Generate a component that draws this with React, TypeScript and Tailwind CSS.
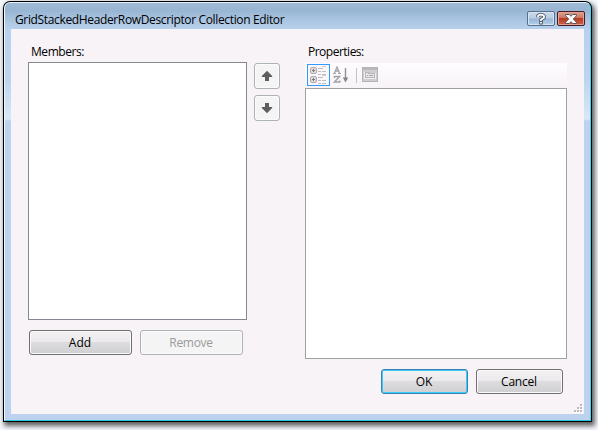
import React from "react";

type ButtonProps = {
  label: string;
  size: string;
  variant?: "normal" | "default" | "disabled";
  tracking?: string;
};

const looks = {
  normal:
    "border-[#707070] bg-[linear-gradient(#f4f1f3_0%,#ebe9eb_46%,#dddcde_50%,#cfced0_100%)] text-black shadow-[inset_0_0_0_1px_#fbfafb]",
  default:
    "border-[#3c7fb1] bg-[linear-gradient(#f4f1f3_0%,#ebe9eb_46%,#dddcde_50%,#cfced0_100%)] text-black shadow-[inset_0_0_0_1px_#36cdf8]",
  disabled:
    "border-[#adb2b5] bg-[#f5f4f5] text-[#9a9a9c] shadow-[inset_0_0_0_1px_#fbfbfb]",
};

function DialogButton({ label, size, variant = "normal", tracking = "" }: ButtonProps) {
  return (
    <button
      className={`flex h-[25px] items-center justify-center rounded-[3px] border pt-px pr-px text-[12px] leading-none ${size} ${looks[variant]}`}
    >
      <span className={tracking}>{label}</span>
    </button>
  );
}

function ArrowButton({ down = false }: { down?: boolean }) {
  return (
    <button className="flex h-[26px] w-[26px] items-center justify-center rounded-[3px] border border-[#adb2b5] bg-[#f5f4f5] shadow-[inset_0_0_0_1px_#fcfcfc]">
      <svg width="12" height="12" viewBox="0 0 12 12" className={down ? "rotate-180" : ""}>
        <path d="M6 .7 11.2 6v1H8v4H4V7H.8V6z" fill="#5e5e5e" />
      </svg>
    </button>
  );
}

function CategoryIcon() {
  return (
    <svg width="21" height="20" viewBox="0 0 21 20" fill="none" shapeRendering="crispEdges">
      {[2, 11].map((y) => (
        <g key={y} transform={`translate(0 ${y})`}>
          <rect x="2.5" y=".5" width="6" height="6" rx="1.5" fill="#dedcde" stroke="#aeacae" shapeRendering="auto" />
          <path d="M4 3.5h3M5.5 2v3" stroke="#7d7b7d" />
          <path d="M10 1.5h5M10 4.5h3M14 4.5h4M10 7.5h3M14 7.5h4" stroke="#bebcbe" />
        </g>
      ))}
      <path d="M14 1.5h4M14 10.5h4" stroke="#cfcdcf" />
    </svg>
  );
}

function SortIcon() {
  return (
    <svg width="17" height="18" viewBox="0 0 17 18" fill="none" stroke="#a5a3a5">
      <path d="M1.5 7 4 1 6.5 7M2.2 5h3.6" strokeWidth="1.3" />
      <path d="M0 7.5h2.8M5 7.5h3" strokeWidth="1" />
      <path d="M1.5 12v-1.5h5L1.5 16h5.3v-1.5" strokeWidth="1.5" />
      <path d="M12.5 2v12" stroke="#949294" strokeWidth="1.4" />
      <path d="M9.8 11.5h5.4L12.5 16.4z" fill="#858385" stroke="none" />
    </svg>
  );
}

function PagesIcon() {
  return (
    <svg width="16" height="15" viewBox="0 0 16 15" fill="none" shapeRendering="crispEdges">
      <rect x=".5" y=".5" width="15" height="14" fill="#d0ced0" stroke="#b5b3b5" />
      <path d="M1 1.5h14M1 2.5h14" stroke="#bab8ba" />
      <path d="M2.5 5.5h4v1h7v5h-11z" fill="#f0eef0" stroke="#f0eef0" />
      <path d="M3.5 5.5h3v1h6v4h-9z" fill="#e9e7e9" stroke="#b7b5b7" />
      <path d="M5 8.5h1M7 8.5h4" stroke="#a5a3a5" />
    </svg>
  );
}

function TitleBar() {
  return (
    <header className="flex h-[26px] items-start bg-[linear-gradient(#9fb9d5_0%,#98b5d3_30%,#a7c3df_60%,#b8d1ed_100%)] pr-[5px] pl-[10px]">
      <h1 className="mt-[8px] text-[12px] leading-[18px] font-normal whitespace-nowrap">
        <span className="tracking-[-0.355px]">GridStackedHeaderRowDescriptor Collection Editor</span>
      </h1>
      <div className="mt-[8px] ml-auto flex gap-[2px]">
        <button className="flex h-[15px] w-[28px] items-center justify-center rounded-[2px] border border-[#586f8b] bg-[linear-gradient(#c7d9ec_0%,#b9cee5_48%,#99b5d5_52%,#b2d0ec_100%)] shadow-[inset_0_0_0_1px_#d6e4f2]">
          <svg width="10" height="12" viewBox="0 0 10 12" fill="none">
            <path d="M2 4.2V2.8L3.2 1.9h3.4L8 3v1.8L5 6.7V8" stroke="#4b5562" strokeWidth="3.4" />
            <path d="M3.2 8h3.6v3.6H3.2z" fill="#4b5562" />
            <path d="M2 4.2V2.8L3.2 1.9h3.4L8 3v1.8L5 6.7V8" stroke="#fff" strokeWidth="1.7" />
            <path d="M4.1 9h1.8v1.6H4.1z" fill="#fff" />
          </svg>
        </button>
        <button className="flex h-[15px] w-[28px] items-center justify-center rounded-[2px] border border-[#471b25] bg-[linear-gradient(#dc9e91_0%,#cd7762_46%,#b63c21_50%,#ce6246_100%)] shadow-[inset_0_0_0_1px_#e2a294]">
          <svg width="12" height="10" viewBox="0 0 12 10">
            <path
              d="M.6.5h3.7L6 2.3 7.7.5h3.7v1.3L8.3 5l3.1 3.2v1.3H7.7L6 7.7 4.3 9.5H.6V8.2L3.7 5 .6 1.8z"
              fill="#fff"
              stroke="#59545b"
            />
          </svg>
        </button>
      </div>
    </header>
  );
}

function ResizeGrip() {
  const dots = [[6, 0], [3, 3], [6, 3], [0, 6], [3, 6], [6, 6]];
  return (
    <svg width="9" height="9" viewBox="0 0 9 9" className="mt-[10px] mr-[1px] ml-auto block" shapeRendering="crispEdges">
      {dots.map(([x, y]) => (
        <g key={`${x}-${y}`}>
          <rect x={x + 1} y={y + 1} width="2" height="2" fill="#fff" />
          <rect x={x} y={y} width="2" height="2" fill="#bdbabf" />
        </g>
      ))}
    </svg>
  );
}

export default function App() {
  return (
    <div className="h-[430px] w-[598px] overflow-hidden bg-[#f5f8fd] pt-px pl-[3px] font-['Open_Sans','Noto_Sans',sans-serif] text-[12px] text-black">
      <div className="h-[421px] w-[589px] rounded-t-[7px] bg-black p-px shadow-[2px_3px_5px_1px_#606060]">
        <div className="flex h-full flex-col rounded-t-[6px] border-t border-r border-b border-l border-t-[#e7f1f8] border-r-[#2cd7f3] border-b-[#2cc7dc] border-l-[#edf9fc] bg-[#bcd2ee] [overflow:clip]">
          <TitleBar />
          <div className="flex min-h-0 flex-1 bg-[linear-gradient(#b8d1ee_0px,#bcd4ef_48px,#d7e8f7_90px,#bcd2ee_92px)] px-[6px] pb-[6px]">
            <main className="flex min-w-0 flex-1 flex-col bg-[#f7f3f7]">
              <div className="flex h-[330px] pl-[17px]">
                <section className="w-[219px] pt-[13px]">
                  <h2 className="h-[20px] pl-[3px] leading-[20px] font-normal">
                    <span className="tracking-[-0.45px]">Members:</span>
                  </h2>
                  <div className="h-[258px] border border-[#828790] bg-white" />
                  <div className="mt-[10px] flex gap-[8px] pl-px">
                    <DialogButton label="Add" size="w-[103px]" />
                    <DialogButton label="Remove" size="w-[103px]" variant="disabled" tracking="tracking-[-0.3px]" />
                  </div>
                </section>
                <nav className="ml-[7px] flex flex-col gap-[6px] pt-[34px]">
                  <ArrowButton />
                  <ArrowButton down />
                </nav>
                <section className="ml-[25px] w-[262px] pt-[13px]">
                  <h2 className="h-[21px] pl-[3px] leading-[20px] font-normal">
                    <span className="tracking-[-0.5px]">Properties:</span>
                  </h2>
                  <div className="flex h-[25px] items-start bg-[linear-gradient(to_bottom,#fefdfe,#f7f3f7)] pt-px pl-[2px]">
                    <div className="flex h-[22px] w-[23px] items-center justify-center border border-[#3399ff] bg-[#f9f7f9]">
                      <CategoryIcon />
                    </div>
                    <div className="mt-[2px] ml-[3px]">
                      <SortIcon />
                    </div>
                    <div className="mt-[4px] ml-[6px] h-[15px] w-px bg-[#c3c1c4]" />
                    <div className="mt-[3px] ml-[5px]">
                      <PagesIcon />
                    </div>
                  </div>
                  <div className="h-[271px] border border-[#a0a0a0] bg-white" />
                </section>
              </div>
              <div className="mt-[10px] flex justify-end gap-[8px] pr-[21px]">
                <DialogButton label="OK" size="w-[87px]" variant="default" />
                <DialogButton label="Cancel" size="w-[87px]" tracking="tracking-[-0.2px]" />
              </div>
              <ResizeGrip />
            </main>
          </div>
        </div>
      </div>
    </div>
  );
}
